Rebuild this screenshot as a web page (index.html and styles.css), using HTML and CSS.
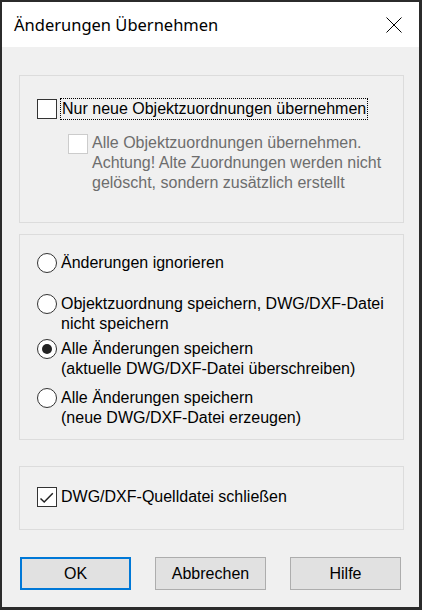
FILE: index.html
```html
<!DOCTYPE html>
<html lang="de">
<head>
<meta charset="utf-8">
<title>Änderungen Übernehmen</title>
<link rel="stylesheet" href="styles.css">
</head>
<body>
<div class="window">
  <div class="titlebar">
    <span class="title">Änderungen Übernehmen</span>
    <svg class="close" width="16" height="16" viewBox="0 0 16 16"><path d="M0.5 0.5 L15.5 15.5 M15.5 0.5 L0.5 15.5" stroke="#000" stroke-width="1" fill="none"/></svg>
  </div>
  <div class="content">
    <div class="group g1">
      <div class="row">
        <span class="box"></span>
        <span class="text focus">Nur neue Objektzuordnungen übernehmen</span>
      </div>
      <div class="row sub">
        <span class="box disabled"></span>
        <span class="text dis">Alle Objektzuordnungen übernehmen.<br>Achtung! Alte Zuordnungen werden nicht<br>gelöscht, sondern zusätzlich erstellt</span>
      </div>
    </div>
    <div class="group g2">
      <div class="row">
        <span class="radio"></span>
        <span class="text">Änderungen ignorieren</span>
      </div>
      <div class="row r2">
        <span class="radio"></span>
        <span class="text">Objektzuordnung speichern, DWG/DXF-Datei<br>nicht speichern</span>
      </div>
      <div class="row r3">
        <span class="radio checked"></span>
        <span class="text">Alle Änderungen speichern<br>(aktuelle DWG/DXF-Datei überschreiben)</span>
      </div>
      <div class="row r4">
        <span class="radio"></span>
        <span class="text">Alle Änderungen speichern<br>(neue DWG/DXF-Datei erzeugen)</span>
      </div>
    </div>
    <div class="group g3">
      <div class="row">
        <span class="box">
          <svg width="18" height="18" viewBox="0 0 18 18"><path d="M2.5 10.5 L6.2 14 L14.8 5.2" stroke="#222" stroke-width="1.5" fill="none"/></svg>
        </span>
        <span class="text">DWG/DXF-Quelldatei schließen</span>
      </div>
    </div>
    <div class="buttons">
      <button class="btn default">OK</button>
      <button class="btn">Abbrechen</button>
      <button class="btn">Hilfe</button>
    </div>
  </div>
</div>
</body>
</html>
```
FILE: styles.css
```css
* { box-sizing: border-box; }
html, body { margin: 0; padding: 0; }
body { width: 422px; height: 610px; overflow: hidden; background: #2b2b2b; }

.window {
  width: 422px;
  height: 610px;
  border-style: solid;
  border-color: #2b2b2b;
  border-width: 2px 3px 3px 2px;
  background: #f0f0f0;
  display: flex;
  flex-direction: column;
  font-family: "Liberation Sans", Arial, sans-serif;
  font-size: 16px;
  color: #000;
}

.titlebar {
  height: 45px;
  background: #fff;
  display: flex;
  align-items: center;
  justify-content: space-between;
  padding: 0 17px 0 12px;
}
.title {
  font-family: "Noto Sans", "Open Sans", sans-serif;
  font-size: 16.5px;
  color: #000;
}
.close { display: block; }

.content {
  padding: 28px 15px 0 17px;
  display: flex;
  flex-direction: column;
}

.group {
  border: 1px solid #dcdcdc;
  padding-left: 17px;
}
.g1 { padding-top: 23px; padding-bottom: 29px; }
.g2 { margin-top: 11px; padding-top: 18px; padding-bottom: 11px; }
.g3 { margin-top: 26px; padding-top: 20px; padding-bottom: 22px; }

.row {
  display: flex;
  align-items: flex-start;
  gap: 4px;
}
.row.sub { margin-top: 14px; margin-left: 31px; }
.r2 { margin-top: 21px; }
.r3 { margin-top: 5px; }
.r4 { margin-top: 9px; }

.text {
  line-height: 20px;
  white-space: nowrap;
}
.text.focus {
  border: 1px dotted #000;
  margin: -1px 0 0 -1px;
  padding: 0 1px 0 1px;
}
.text.dis { color: #6d6d6d; margin-top: -1px; }

.box {
  width: 20px;
  height: 20px;
  flex: none;
  border: 1px solid #333;
  background: #fff;
  display: flex;
  align-items: center;
  justify-content: center;
}
.box svg { display: block; }
.box.disabled { border-color: #cccccc; }

.radio {
  width: 20px;
  height: 20px;
  flex: none;
  border: 1px solid #333;
  border-radius: 50%;
  background: #fff;
  display: flex;
  align-items: center;
  justify-content: center;
}
.radio.checked::after {
  content: "";
  width: 10px;
  height: 10px;
  border-radius: 50%;
  background: #222;
}

.buttons {
  margin-top: 27px;
  margin-left: 1px;
  display: flex;
  gap: 24px;
}
.btn {
  width: 111px;
  height: 33px;
  background: #e1e1e1;
  border: 1px solid #adadad;
  font-family: "Liberation Sans", Arial, sans-serif;
  font-size: 16px;
  color: #000;
  padding: 0;
  margin: 0;
}
.btn.default { border: 2px solid #0078d7; }
```
